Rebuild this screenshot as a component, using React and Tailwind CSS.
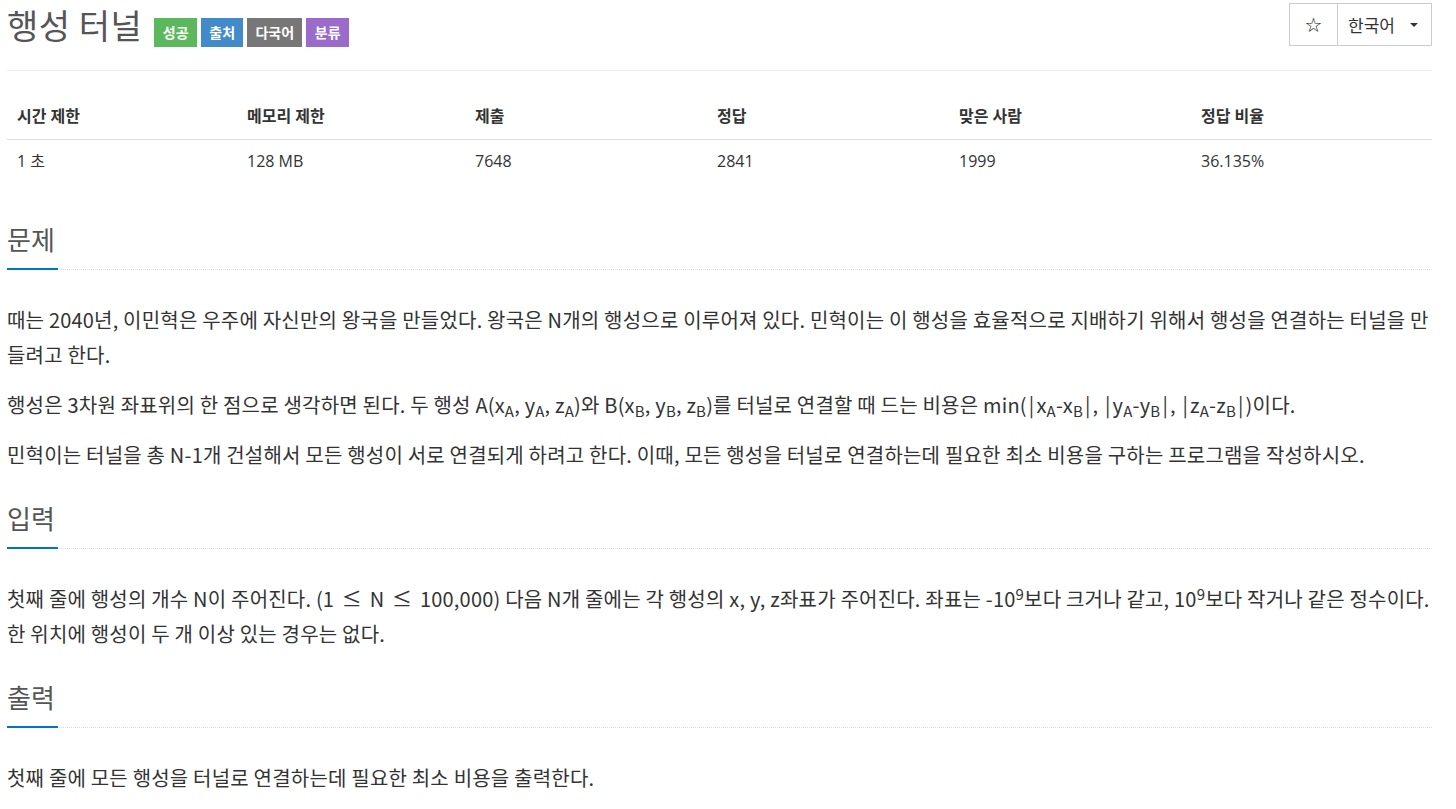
import React from "react";

const Sub = ({ children }) => <sub>{children}</sub>;
const Le = () => <span className="px-[3px]">≤</span>;
const Bar = () => <span className="px-[2px]">|</span>;

function Heading({ children, first }) {
  return (
    <div className={`flex border-b border-dotted border-[#ddd] ${first ? "mt-[39px]" : "mt-[28px]"}`}>
      <h2 className="-mb-px border-b-2 border-[#0076c0] pb-[11px] pr-[3px] font-['Noto_Sans_CJK_KR',sans-serif] text-[26px] leading-[36px] text-[#555] font-normal">
        {children}
      </h2>
    </div>
  );
}

function P({ children }) {
  return (
    <p className="mb-[15px] font-['Noto_Sans_CJK_KR',sans-serif] text-[20px] leading-[35px] tracking-[0.2px] text-[#333]">
      {children}
    </p>
  );
}

export default function App() {
  const cols = ["시간 제한", "메모리 제한", "제출", "정답", "맞은 사람", "정답 비율"];
  const vals = ["1 초", "128 MB", "7648", "2841", "1999", "36.135%"];
  return (
    <div className="min-h-[809px] bg-white pl-[7px] pr-[24px] font-['Open_Sans','Noto_Sans_CJK_KR',sans-serif] text-[#333]">
      {/* top bar */}
      <div className="flex h-[71px] items-start justify-between border-b border-[#eee]">
        <div className="flex items-start">
          <h1 className="font-['Noto_Sans_CJK_KR',sans-serif] text-[34px] leading-[50px] tracking-[0.5px] text-[#555] font-normal">행성 터널</h1>
          <div className="ml-[12px] mt-[18px] flex gap-[4px] font-['Noto_Sans_CJK_KR',sans-serif] text-[14px] font-bold text-white">
            <span className="flex h-[29px] w-[43px] items-center justify-center bg-[#5cb85c]">성공</span>
            <span className="flex h-[29px] w-[42px] items-center justify-center bg-[#428bca]">출처</span>
            <span className="flex h-[29px] w-[55px] items-center justify-center bg-[#777]">다국어</span>
            <span className="flex h-[29px] w-[43px] items-center justify-center bg-[#9b6bcc]">분류</span>
          </div>
        </div>
        <div className="mt-[3px] flex h-[43px] border border-[#ccc] bg-white">
          <div className="flex w-[48px] items-center justify-center border-r border-[#ccc] font-['DejaVu_Sans',sans-serif] text-[20px] text-[#111]">
            ☆
          </div>
          <div className="flex w-[93px] items-center pl-[10px] font-['Noto_Sans_CJK_KR',sans-serif] text-[17px] text-[#333]">
            <span>한국어</span>
            <span className="ml-[15px] mt-[1px] h-0 w-0 border-x-[4px] border-t-[4px] border-x-transparent border-t-[#333]"></span>
          </div>
        </div>
      </div>

      {/* table */}
      <div className="mt-[22px] text-[16px]">
        <div className="grid h-[47px] grid-cols-[230px_228px_242px_242px_242px_1fr] items-center border-b border-[#ddd] font-bold text-[#333]">
          {cols.map((c) => (
            <div key={c} className="px-[10px]">{c}</div>
          ))}
        </div>
        <div className="grid h-[42px] grid-cols-[230px_228px_242px_242px_242px_1fr] items-center text-[#333]">
          {vals.map((v) => (
            <div key={v} className="px-[10px]">{v}</div>
          ))}
        </div>
      </div>

      <Heading first>문제</Heading>
      <div className="mt-[32px]">
        <P>
          때는 2040년, 이민혁은 우주에 자신만의 왕국을 만들었다. 왕국은 N개의 행성으로 이루어져 있다. 민혁이는 이 행성을 효율적으로 지배하기 위해서 행성을 연결하는 터널을 만들려고 한다.
        </P>
        <P>
          행성은 3차원 좌표위의 한 점으로 생각하면 된다. 두 행성 A(x<Sub>A</Sub>, y<Sub>A</Sub>, z<Sub>A</Sub>)와 B(x<Sub>B</Sub>, y<Sub>B</Sub>, z<Sub>B</Sub>)를 터널로 연결할 때 드는 비용은 min(<Bar />x<Sub>A</Sub>-x<Sub>B</Sub><Bar />, <Bar />y<Sub>A</Sub>-y<Sub>B</Sub><Bar />, <Bar />z<Sub>A</Sub>-z<Sub>B</Sub><Bar />)이다.
        </P>
        <P>
          민혁이는 터널을 총 N-1개 건설해서 모든 행성이 서로 연결되게 하려고 한다. 이때, 모든 행성을 터널로 연결하는데 필요한 최소 비용을 구하는 프로그램을 작성하시오.
        </P>
      </div>

      <Heading>입력</Heading>
      <div className="mt-[32px]">
        <P>
          첫째 줄에 행성의 개수 N이 주어진다. (1 <Le /> N <Le /> 100,000) 다음 N개 줄에는 각 행성의 x, y, z좌표가 주어진다. 좌표는 -10<sup>9</sup>보다 크거나 같고, 10<sup>9</sup>보다 작거나 같은 정수이다. 한 위치에 행성이 두 개 이상 있는 경우는 없다.
        </P>
      </div>

      <Heading>출력</Heading>
      <div className="mt-[32px]">
        <P>첫째 줄에 모든 행성을 터널로 연결하는데 필요한 최소 비용을 출력한다.</P>
      </div>
    </div>
  );
}
